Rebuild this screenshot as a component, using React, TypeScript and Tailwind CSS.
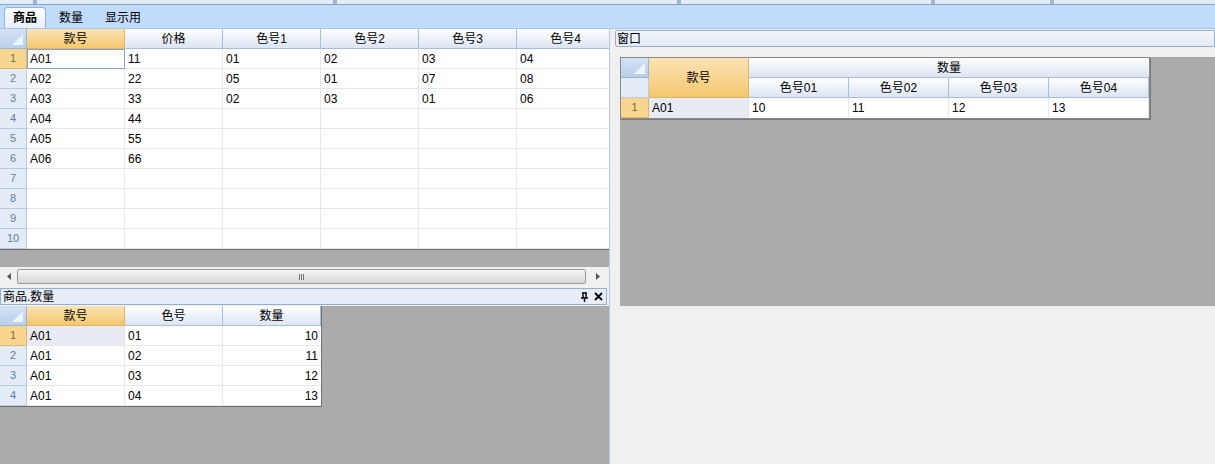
const font = { fontFamily: '"Liberation Sans", "Noto Sans CJK SC", sans-serif' };

const topCols = ['款号', '价格', '色号1', '色号2', '色号3', '色号4'];
const topRows = [
  ['A01', '11', '01', '02', '03', '04'],
  ['A02', '22', '05', '01', '07', '08'],
  ['A03', '33', '02', '03', '01', '06'],
  ['A04', '44', '', '', '', ''],
  ['A05', '55', '', '', '', ''],
  ['A06', '66', '', '', '', ''],
  ['', '', '', '', '', ''],
  ['', '', '', '', '', ''],
  ['', '', '', '', '', ''],
  ['', '', '', '', '', ''],
];

const subRows = [
  ['A01', '01', '10'],
  ['A01', '02', '11'],
  ['A01', '03', '12'],
  ['A01', '04', '13'],
];

function Corner({ className = '' }: { className?: string }) {
  return (
    <div className={`relative shrink-0 border-r border-b border-[#9db4cf] bg-gradient-to-b from-[#d3e2f5] to-[#b9cfea] ${className}`}>
      <svg className="absolute right-[3px] bottom-[3px]" width="11" height="11" viewBox="0 0 11 11">
        <polygon points="11,0 11,11 0,11" fill="#eef4fb" />
      </svg>
    </div>
  );
}

function HeadCell({ label, active, w }: { label: string; active?: boolean; w: string }) {
  return (
    <div
      className={`${w} shrink-0 h-full flex items-center justify-center border-r border-b ${
        active
          ? 'bg-gradient-to-b from-[#fbe3b4] to-[#f5c76c] border-[#e0b46a]'
          : 'bg-gradient-to-b from-white to-[#dbe5f3] border-[#a9bfd8]'
      }`}
    >
      {label}
    </div>
  );
}

function RowHead({ n, active, w }: { n: number; active?: boolean; w: string }) {
  return (
    <div
      className={`${w} shrink-0 h-full flex items-center justify-center border-r border-b text-[11px] ${
        active ? 'bg-[#f8d690] border-[#e0b46a] text-[#7a6a3a]' : 'bg-[#e4ecf7] border-[#b9cbe0] text-[#5d7ea6]'
      }`}
    >
      {n}
    </div>
  );
}

function TopGrid() {
  return (
    <div className="bg-white">
      <div className="flex h-[20px]">
        <Corner className="w-[27px]" />
        {topCols.map((c, i) => (
          <HeadCell key={c} label={c} active={i === 0} w="w-[98px]" />
        ))}
      </div>
      {topRows.map((r, ri) => (
        <div key={ri} className="flex h-[20px]">
          <RowHead n={ri + 1} active={ri === 0} w="w-[27px]" />
          {r.map((v, ci) => (
            <div
              key={ci}
              className={`w-[98px] shrink-0 h-full flex items-center pl-[3px] border-r border-b border-[#e3e7ec] ${
                ri === 0 && ci === 0 ? 'outline outline-1 -outline-offset-1 outline-[#7ea3cf]' : ''
              }`}
            >
              {v}
            </div>
          ))}
        </div>
      ))}
    </div>
  );
}

function SubGrid() {
  return (
    <div className="w-[322px] bg-white border-r border-b border-[#6f6f6f]">
      <div className="flex h-[20px]">
        <Corner className="w-[27px]" />
        <HeadCell label="款号" active w="w-[98px]" />
        <HeadCell label="色号" w="w-[98px]" />
        <HeadCell label="数量" w="w-[98px]" />
      </div>
      {subRows.map((r, ri) => (
        <div key={ri} className="flex h-[20px]">
          <RowHead n={ri + 1} active={ri === 0} w="w-[27px]" />
          <div className={`w-[98px] shrink-0 flex items-center pl-[3px] border-r border-b border-[#e3e7ec] ${ri === 0 ? 'bg-[#e8ebf3]' : ''}`}>{r[0]}</div>
          <div className="w-[98px] shrink-0 flex items-center pl-[3px] border-r border-b border-[#e3e7ec]">{r[1]}</div>
          <div className="w-[98px] shrink-0 flex items-center justify-end pr-[3px] border-b border-[#e3e7ec]">{r[2]}</div>
        </div>
      ))}
    </div>
  );
}

function PivotGrid() {
  const subs = ['色号01', '色号02', '色号03', '色号04'];
  const vals = ['10', '11', '12', '13'];
  return (
    <div className="w-[530px] bg-white border border-[#8a8a8a] shadow-[1px_1px_0_#7a7a7a]">
      <div className="flex h-[40px]">
        <div className="w-[28px] shrink-0 flex flex-col">
          <Corner className="h-[20px] w-[28px]" />
          <div className="h-[20px] bg-[#e4ecf7] border-r border-b border-[#b9cbe0]" />
        </div>
        <div className="w-[100px] shrink-0 flex items-center justify-center border-r border-b border-[#e0b46a] bg-gradient-to-b from-[#fbe3b4] to-[#f5c76c]">
          款号
        </div>
        <div className="flex-1 flex flex-col">
          <div className="h-[20px] flex items-center justify-center border-b border-[#a9bfd8] bg-gradient-to-b from-white to-[#dbe5f3]">数量</div>
          <div className="h-[20px] flex">
            {subs.map((s) => (
              <HeadCell key={s} label={s} w="w-[100px]" />
            ))}
          </div>
        </div>
      </div>
      <div className="flex h-[20px]">
        <RowHead n={1} active w="w-[28px]" />
        <div className="w-[100px] shrink-0 flex items-center pl-[3px] bg-[#e8ebf3] border-r border-[#e3e7ec]">A01</div>
        {vals.map((v) => (
          <div key={v} className="w-[100px] shrink-0 flex items-center pl-[3px] border-r border-[#e3e7ec]">
            {v}
          </div>
        ))}
      </div>
    </div>
  );
}

export default function App() {
  return (
    <div className="w-[1215px] h-[464px] overflow-hidden bg-[#f0f0f0] text-[12px] text-black flex flex-col" style={font}>
      <div className="h-[4px] flex gap-[4px] bg-[#9fb6d2]">
        <div className="w-[33px] bg-[#e3edf8]" />
        <div className="w-[296px] bg-[#e3edf8]" />
        <div className="w-[340px] bg-[#e3edf8]" />
        <div className="w-[250px] bg-[#e3edf8]" />
        <div className="w-[115px] bg-[#e3edf8]" />
        <div className="flex-1 bg-[#e3edf8]" />
      </div>
      <div className="h-[1px] bg-[#8ea6c4]" />
      <div className="h-[24px] bg-[#c0dbfc] flex items-end pl-[4px] border-b border-[#a9c3e3]">
        <div className="w-[42px] h-[21px] rounded-t-[4px] border border-b-0 border-[#92b2dc] bg-gradient-to-b from-white to-[#e6effb] flex items-center justify-center font-bold">
          商品
        </div>
        <div className="h-[21px] flex items-center ml-[13px]">数量</div>
        <div className="h-[21px] flex items-center ml-[22px]">显示用</div>
      </div>
      <div className="flex flex-1 min-h-0">
        <div className="w-[610px] shrink-0 flex flex-col border-r border-[#b9c9dc]">
          <div className="overflow-hidden">
            <TopGrid />
          </div>
          <div className="h-[18px] bg-[#ababab] border-t border-[#6c6c6c]" />
          <div className="h-[19px] flex items-center bg-[#f0f0f0]">
            <div className="w-[17px] flex justify-center">
              <svg width="4" height="7" viewBox="0 0 4 7"><polygon points="4,0 4,7 0,3.5" fill="#555" /></svg>
            </div>
            <div className="w-[569px] h-[15px] rounded-[2px] border border-[#9a9a9a] bg-gradient-to-b from-[#f6f6f6] to-[#d6d6d6] flex items-center justify-center">
              <div className="flex gap-[1px]">
                <div className="w-[1px] h-[6px] bg-[#777]" />
                <div className="w-[1px] h-[6px] bg-[#777]" />
                <div className="w-[1px] h-[6px] bg-[#777]" />
              </div>
            </div>
            <div className="flex-1 flex justify-center">
              <svg width="4" height="7" viewBox="0 0 4 7"><polygon points="0,0 0,7 4,3.5" fill="#555" /></svg>
            </div>
          </div>
          <div className="h-[2px]" />
          <div className="h-[17px] mr-[2px] flex items-center justify-between border border-[#93b0d3] bg-[#e7eef9] pl-[2px] pr-[3px]">
            <span>商品.数量</span>
            <div className="flex items-center gap-[5px]">
              <svg width="9" height="10" viewBox="0 0 9 10">
                <path d="M2 1h5M3 1v5M6 1v5M1 6h7M4.5 6v4" stroke="#000" strokeWidth="1.4" fill="none" />
              </svg>
              <svg width="9" height="9" viewBox="0 0 9 9">
                <path d="M1 1l7 7M8 1l-7 7" stroke="#000" strokeWidth="1.8" />
              </svg>
            </div>
          </div>
          <div className="h-[1px]" />
          <div className="flex-1 bg-[#ababab]">
            <SubGrid />
          </div>
        </div>
        <div className="flex-1 flex flex-col pl-[5px]">
          <div className="h-[17px] mt-[1px] flex items-center border border-[#9ab0cc] rounded-l-[2px] bg-gradient-to-b from-[#f3f6fb] to-[#e3ebf6] pl-[1px]">
            窗口
          </div>
          <div className="h-[10px]" />
          <div className="h-[249px] ml-[5px] bg-[#ababab]">
            <PivotGrid />
          </div>
        </div>
      </div>
    </div>
  );
}
